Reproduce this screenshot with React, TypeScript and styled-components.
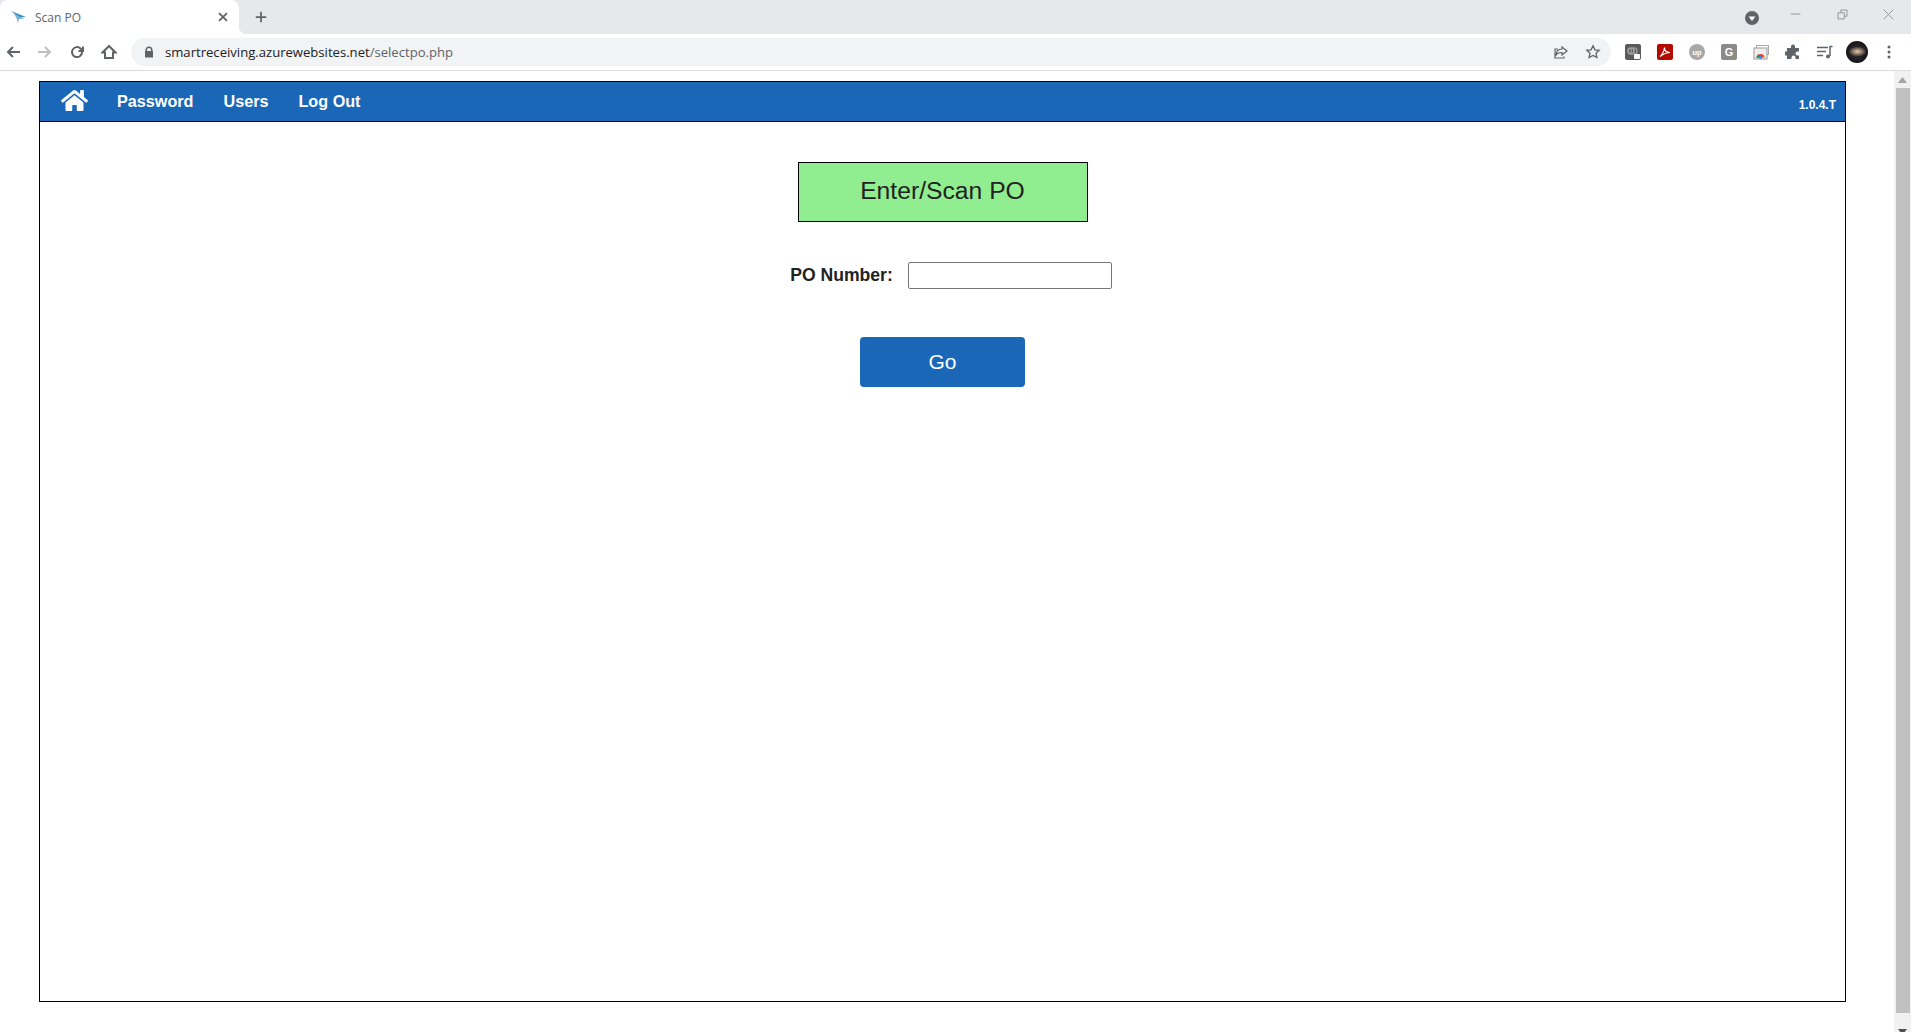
import { FC } from "react";
import styled, { createGlobalStyle } from "styled-components";
import { FaHome } from "react-icons/fa";

const GlobalStyle = createGlobalStyle`
	html, body {
		margin: 0;
		height: 100%;
		overflow: hidden;
		background: #fff;
	}
	* {
		box-sizing: border-box;
	}
`;

const Window = styled.div`
	display: flex;
	flex-direction: column;
	height: 1032px;
	width: 1911px;
`;

/* browser chrome */
const TabStrip = styled.div`
	align-items: stretch;
	background: #e6e9ec;
	display: flex;
	flex: 0 0 34px;
`;

const Tab = styled.div`
	align-items: center;
	background: #fff;
	border-radius: 8px 8px 0 0;
	display: flex;
	padding: 0 9px 0 11px;
	position: relative;
	width: 239px;

	&::after {
		background: radial-gradient(circle at 100% 0, #e6e9ec 8px, #fff 8.5px);
		bottom: 0;
		content: "";
		height: 8px;
		position: absolute;
		right: -8px;
		width: 8px;
	}
`;

const TabTitle = styled.span`
	color: #5f6368;
	flex: 1;
	font: 12px "Open Sans", sans-serif;
	margin-left: 9px;
`;

const NewTab = styled.div`
	align-items: center;
	display: flex;
	margin-left: 15px;
`;

const WindowControls = styled.div`
	align-items: center;
	display: flex;
	margin-left: auto;
`;

const ProfileDot = styled.div`
	display: flex;
	margin-right: 14px;
	margin-top: 1px;
`;

const WindowButton = styled.div`
	align-items: center;
	align-self: flex-start;
	display: flex;
	height: 28px;
	justify-content: center;
	width: 46px;
`;

const ToolBar = styled.div`
	align-items: center;
	background: #fff;
	border-bottom: 1px solid #dadce0;
	display: flex;
	flex: 0 0 37px;
	padding-left: 1px;
`;

const NavIcon = styled.div`
	align-items: center;
	display: flex;
	flex: 0 0 24px;
	height: 24px;
	justify-content: center;
	margin-right: 8px;
`;

const Omnibox = styled.div`
	align-items: center;
	background: #f1f3f4;
	border-radius: 14px;
	display: flex;
	flex: 0 0 1480px;
	height: 28px;
	margin-left: 2px;
	padding: 0 10px 0 12px;
`;

const UrlText = styled.span`
	color: #202124;
	flex: 1;
	font: 13.1px "Open Sans", sans-serif;
	margin-left: 10px;

	span {
		color: #5f6368;
	}
`;

const OmniActions = styled.div`
	align-items: center;
	display: flex;
	gap: 16px;
`;

const Extensions = styled.div`
	align-items: center;
	display: flex;
	margin-left: 10px;
`;

const ExtSlot = styled.div`
	align-items: center;
	display: flex;
	flex: 0 0 24px;
	height: 24px;
	justify-content: center;
	margin-right: 8px;
`;

const ExtTile = styled.div<{ $bg: string }>`
	align-items: center;
	background: ${(props) => props.$bg};
	border-radius: 2px;
	color: #fff;
	display: flex;
	font: bold 11px "Liberation Sans", sans-serif;
	height: 16px;
	justify-content: center;
	width: 16px;
`;

const UpBadge = styled(ExtTile)`
	border-radius: 50%;
	font-size: 7.5px;
`;

const Avatar = styled.div`
	background:
		radial-gradient(ellipse 9px 5px at 52% 48%, #e2cfae 0%, #8f7c64 50%, transparent 100%),
		radial-gradient(circle at 50% 50%, #3a3840 0%, #141416 70%, #000 100%);
	border-radius: 50%;
	flex: 0 0 22px;
	height: 22px;
`;

/* page */
const Viewport = styled.div`
	display: flex;
	flex: 1;
	min-height: 0;
	overflow: hidden;
`;

const Page = styled.main`
	flex: 1;
	padding: 10px 48px 0 39px;
`;

const Frame = styled.div`
	border: 1px solid #000;
	display: flex;
	flex-direction: column;
	height: 921px;
`;

const NavBar = styled.nav`
	align-items: center;
	background: #1a67b7;
	border-bottom: 1px solid #000;
	color: #fff;
	display: flex;
	flex: 0 0 40px;
	font: bold 16.2px "Liberation Sans", sans-serif;
	padding: 0 9px 0 20px;
`;

const HomeLink = styled.a`
	display: flex;
	margin-left: 1px;
	margin-right: 14px;
	margin-top: -3px;
`;

const NavLink = styled.a`
	color: #fff;
	padding: 0 15px;
`;

const Version = styled.span`
	font-size: 12px;
	margin-left: auto;
	margin-top: 7px;
`;

const Content = styled.div`
	align-items: center;
	display: flex;
	flex-direction: column;
	padding-top: 40px;
`;

const Heading = styled.div`
	align-items: center;
	background: #90ee90;
	border: 1px solid #000;
	color: #222;
	display: flex;
	font: 24.7px "Liberation Sans", sans-serif;
	height: 60px;
	justify-content: center;
	padding-bottom: 2px;
	width: 290px;
`;

const Field = styled.div`
	align-items: center;
	display: flex;
	gap: 15px;
	margin-left: 17px;
	margin-top: 40px;
`;

const FieldLabel = styled.label`
	color: #222;
	font: bold 17.6px "Liberation Sans", sans-serif;
`;

const FieldInput = styled.input`
	background: #fff;
	border: 1px solid #767676;
	border-radius: 2px;
	height: 27px;
	outline: none;
	width: 204px;
`;

const GoButton = styled.button`
	background: #1a67b7;
	border: none;
	border-radius: 4px;
	color: #fff;
	font: 21px "Liberation Sans", sans-serif;
	height: 50px;
	margin-top: 48px;
	padding-bottom: 2px;
	width: 165px;
`;

const ScrollTrack = styled.div`
	align-items: center;
	background: #f1f1f1;
	display: flex;
	flex: 0 0 17px;
	flex-direction: column;
`;

const ScrollArrow = styled.div<{ $offset?: number }>`
	align-items: center;
	display: flex;
	flex: 0 0 17px;
	justify-content: center;
	margin-top: ${(props) => props.$offset ?? 0}px;
`;

const ScrollThumb = styled.div`
	background: #c1c1c1;
	flex: 0 0 925px;
	margin-left: 1px;
	width: 14px;
`;

const Plane: FC = () => (
	<svg width="15" height="13" viewBox="0 0 15 13">
		<path d="M0 0l15 6-7 .6z" fill="#3a8fca" />
		<path d="M3 3l10 4.500-5 .5-1 4-1.500-5z" fill="#7ab0d6" />
	</svg>
);

const Glyph: FC<{ d: string; color?: string; size?: number; weight?: number }> = ({
	d,
	color = "#5f6368",
	size = 16,
	weight = 2,
}) => (
	<svg width={size} height={size} viewBox="0 0 16 16" fill="none">
		<path d={d} stroke={color} strokeWidth={weight} />
	</svg>
);

const App: FC = () => (
	<Window>
		<GlobalStyle />
		<TabStrip>
			<Tab>
				<Plane />
				<TabTitle>Scan PO</TabTitle>
				<Glyph d="M3.500 3.500l9 9M12.500 3.500l-9 9" size={14} />
			</Tab>
			<NewTab>
				<Glyph d="M8 2v12M2 8h12" size={14} />
			</NewTab>
			<WindowControls>
				<ProfileDot>
					<svg width="14" height="14" viewBox="0 0 14 14">
						<circle cx="7" cy="7" r="7" fill="#5f6368" />
						<path d="M3.500 5.500h7L7 10z" fill="#fff" />
					</svg>
				</ProfileDot>
				<WindowButton>
					<Glyph d="M2 8h11" color="#8a8d90" size={14} weight={1} />
				</WindowButton>
				<WindowButton>
					<Glyph d="M1.500 5.500h9v9h-9zM5.500 5V1.500h9v9H11" color="#8a8d90" size={11} weight={1.3} />
				</WindowButton>
				<WindowButton>
					<Glyph d="M2 2l12 12M14 2L2 14" color="#8a8d90" size={13} weight={1} />
				</WindowButton>
			</WindowControls>
		</TabStrip>
		<ToolBar>
			<NavIcon>
				<Glyph d="M15 8H3M8 3L3 8l5 5" />
			</NavIcon>
			<NavIcon>
				<Glyph d="M1 8h12M8 3l5 5-5 5" color="#bdc1c6" />
			</NavIcon>
			<NavIcon>
				<Glyph d="M13 8a5 5 0 1 1-1.500-3.500L14 7M14 2.500V7H9.500" />
			</NavIcon>
			<NavIcon>
				<Glyph d="M8 2L1.500 8.500H4V14h8V8.500h2.500z" />
			</NavIcon>
			<Omnibox>
				<svg width="12" height="12" viewBox="0 0 12 12">
					<path
						d="M2.500 5V4a3.500 3.500 0 0 1 7 0v1h.5v6.500H2V5zM4 5h4V4a2 2 0 0 0-4 0z"
						fill="#5f6368"
						fillRule="evenodd"
					/>
				</svg>
				<UrlText>
					smartreceiving.azurewebsites.net<span>/selectpo.php</span>
				</UrlText>
				<OmniActions>
					<Glyph d="M9 3l5 4-5 4V8.500C6 8.500 4 9.500 3 11.500c0-4 2-6.500 6-6.500zM11 12.500v1.500H2V5h3" weight={1.2} />
					<Glyph d="M8 1.800l1.900 4 4.300.5-3.200 2.900.9 4.300L8 11.400l-3.900 2.100.9-4.300-3.200-2.900 4.300-.5z" weight={1.3} />
				</OmniActions>
			</Omnibox>
			<Extensions>
				<ExtSlot>
					<ExtTile $bg="#5a5a5a">
						<svg width="14" height="14" viewBox="0 0 14 14">
							<circle cx="5" cy="6" r="3" fill="none" stroke="#aaa" strokeWidth="1.400" />
							<circle cx="8" cy="6" r="3" fill="none" stroke="#999" strokeWidth="1.400" />
							<rect x="8" y="9" width="6" height="5" rx="1" fill="#fff" />
						</svg>
					</ExtTile>
				</ExtSlot>
				<ExtSlot>
					<ExtTile $bg="#b30b00">
						<svg width="12" height="12" viewBox="0 0 12 12" fill="none">
							<path d="M1 10.500C3 9 5.500 4.500 5.500 1.500c0 3 2 5 5.500 5-3 0-6.500 1.500-10 4z" stroke="#fff" strokeWidth="1.200" />
						</svg>
					</ExtTile>
				</ExtSlot>
				<ExtSlot>
					<UpBadge $bg="#a8a8a8">up</UpBadge>
				</ExtSlot>
				<ExtSlot>
					<ExtTile $bg="#8a8a8a">G</ExtTile>
				</ExtSlot>
				<ExtSlot>
					<svg width="16" height="16" viewBox="0 0 16 16">
						<rect x="3.500" y="1.500" width="12" height="9" fill="#fff" stroke="#aaa" />
						<rect x="1" y="4" width="13" height="11" fill="#eee" stroke="#999" />
						<path d="M3.500 14a4 4 0 0 1 8 0z" fill="#db4437" />
						<path d="M3.500 14a4 4 0 0 1 2-3.400L7.500 14z" fill="#0f9d58" />
						<circle cx="7.500" cy="13.500" r="1.500" fill="#4285f4" />
						<path d="M9 14h2.500a4 4 0 0 0-.5-2z" fill="#f4b400" />
					</svg>
				</ExtSlot>
				<ExtSlot>
					<svg width="16" height="16" viewBox="0 0 16 16">
						<path
							d="M6 2.500a2 2 0 0 1 4 0V4h4v3.500h-1.500a2 2 0 0 0 0 4H14V15h-3.500v-1.500a2 2 0 0 0-4 0V15H2v-3.500H.8a2 2 0 0 1 0-4H2V4h4z"
							fill="#5f6368"
						/>
					</svg>
				</ExtSlot>
				<ExtSlot>
					<svg width="16" height="16" viewBox="0 0 16 16" fill="none" stroke="#5f6368">
						<path d="M0 3.500h11M0 7.500h9M0 11.500h6" strokeWidth="1.300" />
						<path d="M13 2v10" strokeWidth="1.500" />
						<path d="M13 2.500h2.500" strokeWidth="1.500" />
						<circle cx="11" cy="12.500" r="2" fill="#5f6368" stroke="none" />
					</svg>
				</ExtSlot>
				<ExtSlot>
					<Avatar />
				</ExtSlot>
				<ExtSlot>
					<svg width="4" height="14" viewBox="0 0 4 14">
						<circle cx="2" cy="2" r="1.500" fill="#5f6368" />
						<circle cx="2" cy="7" r="1.500" fill="#5f6368" />
						<circle cx="2" cy="12" r="1.500" fill="#5f6368" />
					</svg>
				</ExtSlot>
			</Extensions>
		</ToolBar>
		<Viewport>
			<Page>
				<Frame>
					<NavBar>
						<HomeLink>
							<FaHome size={27} />
						</HomeLink>
						<NavLink>Password</NavLink>
						<NavLink>Users</NavLink>
						<NavLink>Log Out</NavLink>
						<Version>1.0.4.T</Version>
					</NavBar>
					<Content>
						<Heading>Enter/Scan PO</Heading>
						<Field>
							<FieldLabel htmlFor="poNumber">PO Number:</FieldLabel>
							<FieldInput id="poNumber" type="text" />
						</Field>
						<GoButton type="button">Go</GoButton>
					</Content>
				</Frame>
			</Page>
			<ScrollTrack>
				<ScrollArrow>
					<svg width="9" height="6" viewBox="0 0 9 6">
						<path d="M4.500 0L9 6H0z" fill="#a3a3a3" />
					</svg>
				</ScrollArrow>
				<ScrollThumb />
				<ScrollArrow $offset={10}>
					<svg width="9" height="6" viewBox="0 0 9 6">
						<path d="M0 0h9L4.500 6z" fill="#505050" />
					</svg>
				</ScrollArrow>
			</ScrollTrack>
		</Viewport>
	</Window>
);

export default App;
